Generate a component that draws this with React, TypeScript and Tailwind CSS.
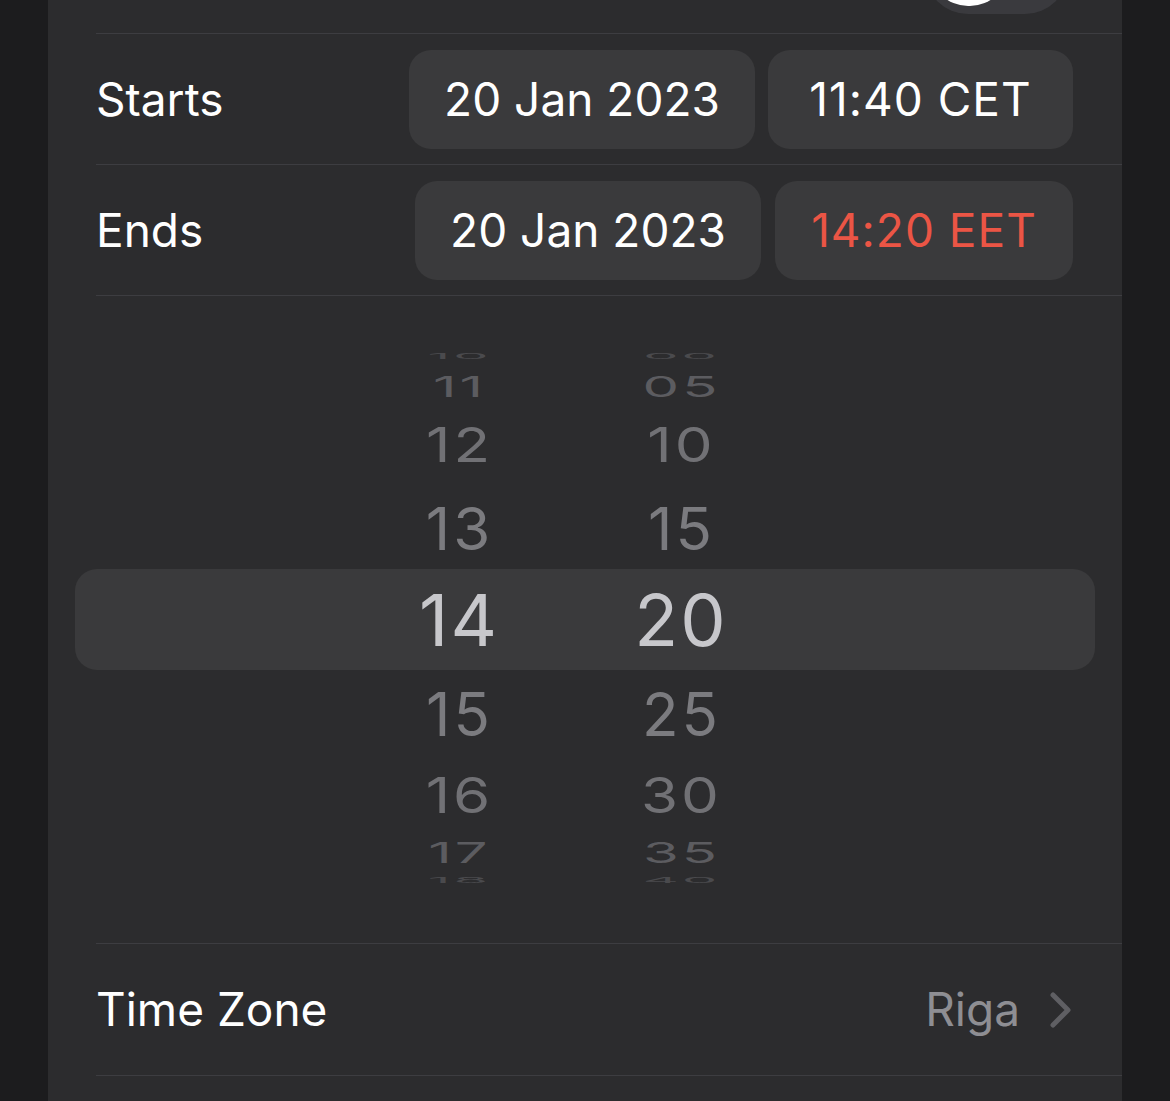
import React from 'react';

const font = { fontFamily: 'Inter, "Noto Sans", sans-serif' };

type PickerRow = {
  hour: string;
  minute: string;
  height: string;
  size: string;
  color: string;
  squash: string;
};

// rows of the wheel, from top to bottom; the selected one sits in the highlight
const rows: PickerRow[] = [
  { hour: '10', minute: '00', height: 'h-[30px]', size: 'text-[56px]', color: 'text-[#4a4a4d]', squash: 'scale-y-[0.14]' },
  { hour: '11', minute: '05', height: 'h-[30px]', size: 'text-[58px]', color: 'text-[#5c5c60]', squash: 'scale-y-[0.5]' },
  { hour: '12', minute: '10', height: 'h-[86px]', size: 'text-[60px]', color: 'text-[#717175]', squash: 'scale-y-[0.8]' },
  { hour: '13', minute: '15', height: 'h-[82px]', size: 'text-[60px]', color: 'text-[#7b7b7f]', squash: 'scale-y-[0.98]' },
];

const rowsBelow: PickerRow[] = [
  { hour: '15', minute: '25', height: 'h-[88px]', size: 'text-[60px]', color: 'text-[#7b7b7f]', squash: 'scale-y-[1]' },
  { hour: '16', minute: '30', height: 'h-[74px]', size: 'text-[60px]', color: 'text-[#717175]', squash: 'scale-y-[0.82]' },
  { hour: '17', minute: '35', height: 'h-[40px]', size: 'text-[58px]', color: 'text-[#5c5c60]', squash: 'scale-y-[0.5]' },
  { hour: '18', minute: '40', height: 'h-[16px]', size: 'text-[56px]', color: 'text-[#4a4a4d]', squash: 'scale-y-[0.14]' },
];

const WheelRow: React.FC<{ row: PickerRow }> = ({ row }) => (
  <div className={`flex items-center pl-[303px] gap-[62px] ${row.height}`}>
    <div className={`w-[160px] flex justify-center leading-none tracking-[3px] ${row.size} ${row.color}`}>
      <span className={`inline-block pl-[3px] ${row.squash}`}>{row.hour}</span>
    </div>
    <div className={`w-[160px] flex justify-center leading-none tracking-[3px] ${row.size} ${row.color}`}>
      <span className={`inline-block pl-[3px] ${row.squash}`}>{row.minute}</span>
    </div>
  </div>
);

const Chip: React.FC<{ children: React.ReactNode; width: string; red?: boolean; spaced?: boolean }> = ({
  children,
  width,
  red,
  spaced,
}) => (
  <div
    className={`h-[99px] ${width} rounded-[22px] bg-[#3a3a3c] flex items-center justify-center text-[46px] ${
      red ? 'text-[#eb5545]' : 'text-white'
    } ${spaced ? 'tracking-[1px]' : ''}`}
  >
    {children}
  </div>
);

export default function App() {
  return (
    <div className="min-h-screen bg-[#1c1c1e] px-[48px]" style={font}>
      <div className="bg-[#2c2c2e] h-[1101px] overflow-hidden">
        {/* all-day row, mostly scrolled away */}
        <div className="pl-[48px]">
          <div className="h-[34px] border-b border-[#3d3d41] relative overflow-hidden">
            <div className="absolute left-[829px] top-[-72px] w-[143px] h-[86px] rounded-full bg-[#3a3a3e]">
              <div className="absolute left-[5px] top-[2px] w-[78px] h-[76px] rounded-full bg-white" />
            </div>
          </div>
        </div>

        {/* Starts */}
        <div className="pl-[48px]">
          <div className="h-[131px] border-b border-[#3d3d41] flex items-center pr-[49px]">
            <span className="text-white text-[46px] flex-1">Starts</span>
            <div className="flex gap-[13px]">
              <Chip width="w-[346px]">20 Jan 2023</Chip>
              <Chip width="w-[305px]" spaced>
                11:40 CET
              </Chip>
            </div>
          </div>
        </div>

        {/* Ends */}
        <div className="pl-[48px]">
          <div className="h-[131px] border-b border-[#3d3d41] flex items-center pr-[49px]">
            <span className="text-white text-[46px] flex-1">Ends</span>
            <div className="flex gap-[14px]">
              <Chip width="w-[346px]">20 Jan 2023</Chip>
              <Chip width="w-[298px]" red spaced>
                14:20 EET
              </Chip>
            </div>
          </div>
        </div>

        {/* time wheel */}
        <div className="h-[647px] px-[27px] pt-[45px]">
          {rows.map((r) => (
            <WheelRow key={r.hour} row={r} />
          ))}
          <div className="h-[101px] rounded-[22px] bg-[#3a3a3c] flex items-center pl-[303px] gap-[62px] text-[#c7c7cb] text-[72px] leading-none tracking-[2px]">
            <div className="w-[160px] flex justify-center pl-[2px]">14</div>
            <div className="w-[160px] flex justify-center pl-[2px]">20</div>
          </div>
          {rowsBelow.map((r) => (
            <WheelRow key={r.hour} row={r} />
          ))}
        </div>

        {/* Time Zone */}
        <div className="pl-[48px]">
          <div className="h-[133px] border-t border-b border-[#3d3d41] flex items-center pr-[50px]">
            <span className="text-white text-[46px] flex-1">Time Zone</span>
            <span className="text-[#8e8e93] text-[46px] mr-[30px]">Riga</span>
            <svg width="22" height="36" viewBox="0 0 22 36" fill="none">
              <path d="M3 3 L18 18 L3 33" stroke="#5f5f63" strokeWidth="5" strokeLinecap="round" strokeLinejoin="round" />
            </svg>
          </div>
        </div>
      </div>
    </div>
  );
}
